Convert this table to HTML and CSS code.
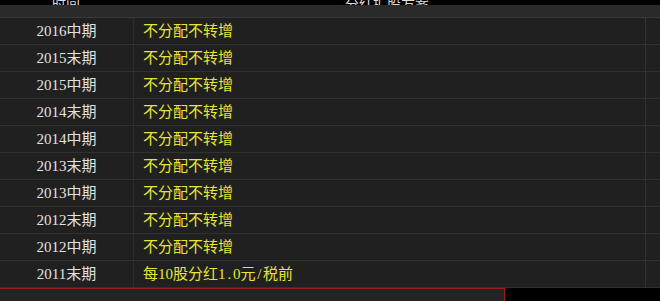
FILE: index.html
```html
<!DOCTYPE html>
<html lang="zh">
<head>
  <meta charset="UTF-8" />
  <title>分红扩股</title>
  <link rel="stylesheet" href="styles.css">
</head>
<body>
  <div class="tabulka">
    <div class="hlava">
      <span class="h-cas">时间</span>
      <span class="h-plan">分红扩股方案</span>
    </div>
    <div class="pas"></div>

    <div class="radek"><span class="cas">2016中期</span><span class="plan">不分配不转增</span><span class="konec"></span></div>
    <div class="radek"><span class="cas">2015末期</span><span class="plan">不分配不转增</span><span class="konec"></span></div>
    <div class="radek"><span class="cas">2015中期</span><span class="plan">不分配不转增</span><span class="konec"></span></div>
    <div class="radek"><span class="cas">2014末期</span><span class="plan">不分配不转增</span><span class="konec"></span></div>
    <div class="radek"><span class="cas">2014中期</span><span class="plan">不分配不转增</span><span class="konec"></span></div>
    <div class="radek"><span class="cas">2013末期</span><span class="plan">不分配不转增</span><span class="konec"></span></div>
    <div class="radek"><span class="cas">2013中期</span><span class="plan">不分配不转增</span><span class="konec"></span></div>
    <div class="radek"><span class="cas">2012末期</span><span class="plan">不分配不转增</span><span class="konec"></span></div>
    <div class="radek"><span class="cas">2012中期</span><span class="plan">不分配不转增</span><span class="konec"></span></div>
    <div class="radek"><span class="cas">2011末期</span><span class="plan">每10股分红1<span class="pul">.</span>0元<span class="pul">/</span>税前</span><span class="konec"></span></div>
  </div>

  <div class="pata">
    <div class="zalozka"></div>
  </div>
</body>
</html>
```

FILE: styles.css
```css
html,
body {
  margin: 0;
  background-color: #000;
  font-family: "Liberation Serif", "Noto Sans CJK SC", serif;
  font-size: 15px;
  overflow: hidden;
}

.tabulka {
  width: 660px;
}

.hlava {
  height: 5px;
  overflow: hidden;
  position: relative;
  color: #ddd;
  font-size: 14px;
}

.h-cas,
.h-plan {
  position: absolute;
  bottom: 0;
  line-height: 14px;
  margin-bottom: -7px;
}

.h-cas {
  left: 52px;
}

.h-plan {
  left: 345px;
}

.pas {
  height: 12px;
  background-color: #2a2a2a;
  border-bottom: 1px solid #3a3a3a;
}

.radek {
  display: flex;
  height: 26px;
  background-color: #202020;
  border-bottom: 1px solid #313131;
  line-height: 26px;
}

.cas {
  width: 133px;
  border-right: 1px solid #2c2c2c;
  text-align: center;
  color: #e2e2e2;
}

.plan {
  flex: 1;
  padding-left: 9px;
  color: #e6e636;
}

.pul {
  display: inline-block;
  width: 7.5px;
  text-align: center;
}

.konec {
  width: 14px;
  border-left: 1px solid #333;
}

.pata {
  display: flex;
}

.zalozka {
  width: 504px;
  height: 20px;
  background-color: #232323;
  border-top: 1px solid #a01818;
  border-right: 1px solid #a01818;
}
```
